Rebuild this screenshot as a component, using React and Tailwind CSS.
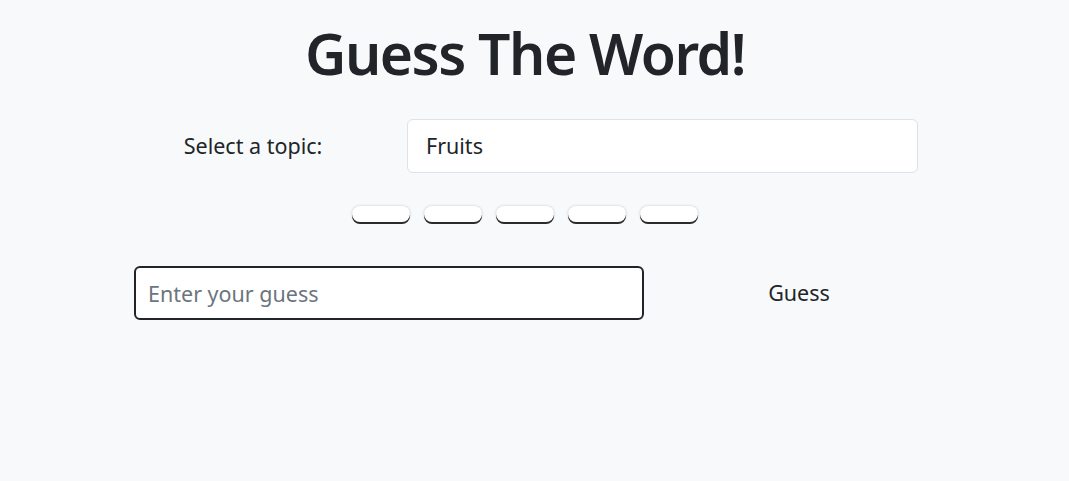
import { useState } from 'react';

export default function App() {
  const [topic, setTopic] = useState('Fruits');
  const [guess, setGuess] = useState('');
  const letters = ['', '', '', '', ''];

  return (
    <div className="min-h-screen bg-[#f8f9fa] text-[#212529] font-['Noto_Sans',sans-serif]">
      <div className="w-[1050px]">
        {/* Title */}
        <h1 className="pt-[19px] text-center text-[57px] font-semibold leading-[1.2] tracking-[-1.5px]">
          Guess The Word!
        </h1>

        {/* Topic select */}
        <div className="mt-[32px] flex items-center pl-[134px]">
          <label className="w-[273px] pr-[35px] text-center text-[21.5px]">Select a topic:</label>
          <select
            value={topic}
            onChange={(e) => setTopic(e.target.value)}
            className="h-[54px] w-[511px] appearance-none rounded-[6px] border border-[#dee2e6] bg-white px-[18px] text-[21.5px] outline-none"
          >
            <option>Fruits</option>
            <option>Animals</option>
            <option>Countries</option>
          </select>
        </div>

        {/* Letter tiles */}
        <div className="mt-[33px] flex justify-center gap-[14px]">
          {letters.map((l, i) => (
            <div
              key={i}
              className="h-[16px] w-[58px] rounded-full bg-white shadow-[0_2px_0_#2b2b2b,0_0_3px_rgba(0,0,0,0.2)]"
            >
              {l}
            </div>
          ))}
        </div>

        {/* Guess row */}
        <div className="mt-[44px] flex items-center pl-[134px]">
          <input
            value={guess}
            onChange={(e) => setGuess(e.target.value)}
            placeholder="Enter your guess"
            className="h-[54px] w-[510px] rounded-[6px] border-2 border-[#212529] bg-white px-[12px] text-[21.5px] outline-none placeholder:text-[#6c757d]"
          />
          <button className="w-[310px] text-center text-[21.5px]">Guess</button>
        </div>
      </div>
    </div>
  );
}
